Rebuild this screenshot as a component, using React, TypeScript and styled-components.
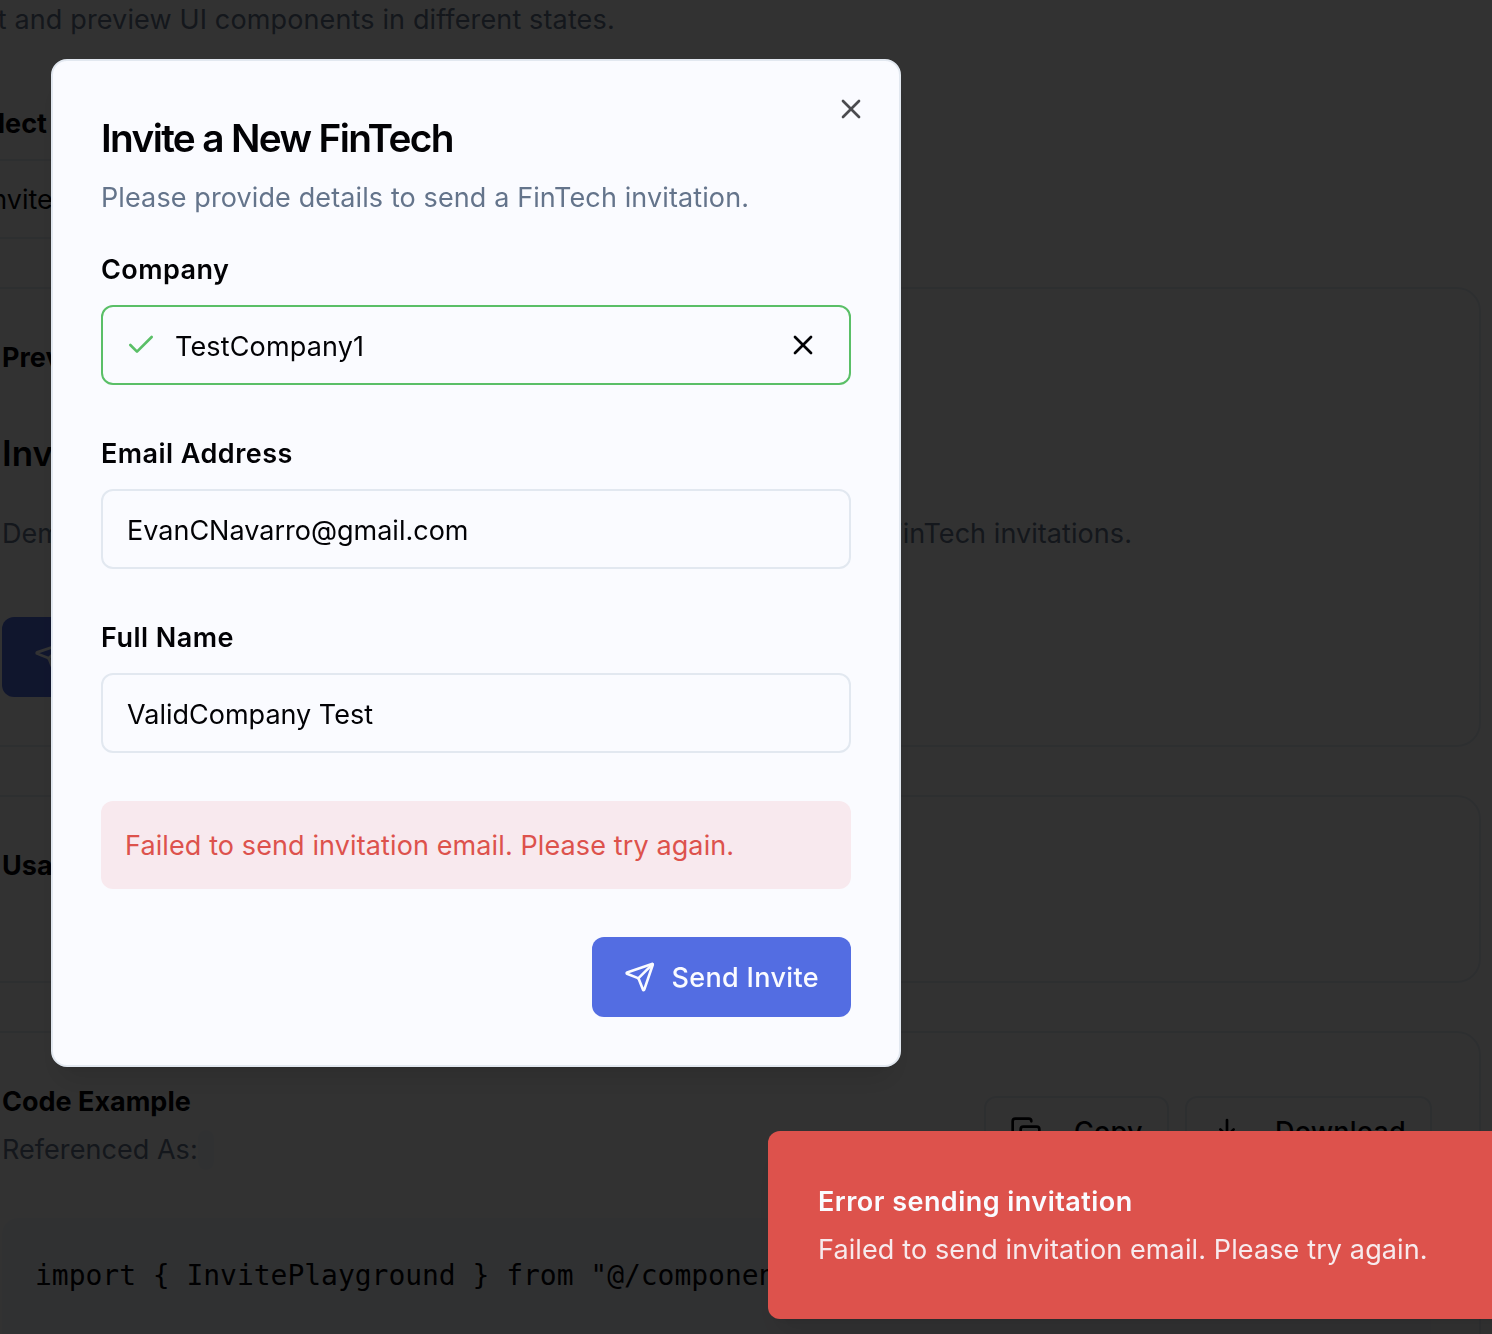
import React from "react";
import styled, { createGlobalStyle } from "styled-components";
import { Check, Copy, Download, Send, X } from "lucide-react";

const GlobalStyle = createGlobalStyle`
  *, *::before, *::after { box-sizing: border-box; }
  html, body { margin: 0; height: 100%; overflow: hidden; }
  body {
    background: #fafafa;
    color: #020205;
    font-family: Inter, "Liberation Sans", sans-serif;
    font-size: 27px;
    line-height: 40px;
  }
  h1, h2, h3, p, pre { margin: 0; }
  button, input { font: inherit; color: inherit; letter-spacing: inherit; }
`;

/* Playground page */

const Page = styled.main`
  width: 1529px;
  height: 100vh;
  margin-left: -48px;
  display: flex;
  flex-direction: column;
  overflow: hidden;
  white-space: nowrap;
`;

const Muted = styled.p`
  color: #64748b;
  letter-spacing: 0.14px;
`;

const Selector = styled.section`
  display: flex;
  flex-direction: column;
  gap: 15px;
  margin: 64px 0 48px;
  padding-left: 5px;
`;

const SelectorLabel = styled.h2`
  font-size: 27px;
  font-weight: 700;
  line-height: 40px;
  padding-left: 7px;
`;

const SelectBox = styled.div`
  width: 700px;
  height: 80px;
  padding: 2px 24px 0 25px;
  display: flex;
  align-items: center;
  border: 2px solid #e2e8f0;
  border-radius: 12px;
`;

const Card = styled.section<{ $height: number }>`
  flex: none;
  height: ${(p) => p.$height}px;
  margin-bottom: 48px;
  padding: 49px 48px 48px;
  border: 2px solid #e2e8f0;
  border-radius: 24px;
`;

const CardTitle = styled.h2`
  font-size: 27px;
  font-weight: 700;
  line-height: 40px;
`;

const DemoTitle = styled.h3`
  margin-top: 47px;
  font-size: 35px;
  font-weight: 600;
  line-height: 56px;
`;

const DemoText = styled(Muted)`
  width: 1130px;
  margin-top: 33px;
  display: flex;
  justify-content: space-between;
  letter-spacing: 0.06px;
`;

const CardHeader = styled.header`
  display: flex;
  justify-content: space-between;
  align-items: flex-start;
  height: 136px;
`;

const HeaderText = styled.div`
  display: flex;
  flex-direction: column;
  gap: 8px;
`;

const Reference = styled(Muted)`
  display: flex;
  align-items: center;
  letter-spacing: 0.05px;
`;

const CodeChip = styled.code`
  width: 16px;
  height: 40px;
  border-radius: 8px;
  background: #f1f5f9;
`;

const Actions = styled.div`
  display: flex;
  gap: 16px;
  padding-top: 14px;
  margin-right: -1px;
`;

const OutlineButton = styled.button<{ $width: number }>`
  width: ${(p) => p.$width}px;
  height: 72px;
  padding: 0 24px;
  display: flex;
  align-items: center;
  gap: 32px;
  border: 2px solid #e2e8f0;
  border-radius: 12px;
  background: transparent;
  font-weight: 500;
  letter-spacing: 0.2px;
`;

const CodeBlock = styled.pre`
  height: 150px;
  padding: 38px 33px;
  border-radius: 16px;
  background: #f1f5f9;
  font-family: "DejaVu Sans Mono", monospace;
  font-size: 28px;
  line-height: 40px;
  letter-spacing: -0.03px;
`;

/* Dialog */

const Overlay = styled.div`
  position: fixed;
  inset: 0;
  background: rgba(0, 0, 0, 0.8);
`;

const Dialog = styled.section`
  position: fixed;
  top: 59px;
  left: 51px;
  width: 850px;
  height: 1008px;
  padding: 49px 48px 48px;
  display: flex;
  flex-direction: column;
  border: 2px solid #e2e8f0;
  border-radius: 16px;
  background: #fafbff;
  box-shadow: 0 20px 30px -6px rgba(0, 0, 0, 0.1), 0 8px 12px -8px rgba(0, 0, 0, 0.1);
  color: #020205;
`;

const CloseButton = styled.button`
  position: absolute;
  top: 32px;
  right: 32px;
  padding: 0;
  display: flex;
  border: 0;
  background: none;
  opacity: 0.7;
`;

const DialogTitle = styled.h1`
  font-size: 38.8px;
  font-weight: 600;
  line-height: 56px;
  letter-spacing: -1.65px;
`;

const DialogText = styled(Muted)`
  margin-top: 12px;
  letter-spacing: 0.11px;
`;

const Form = styled.form`
  margin-top: 32px;
  display: flex;
  flex-direction: column;
  gap: 48px;
`;

const Field = styled.label`
  display: flex;
  flex-direction: column;
  gap: 15px;

  & + & {
    margin-top: 1px;
  }
`;

const FieldLabel = styled.span`
  font-weight: 600;
  letter-spacing: 0.46px;
`;

const InputBox = styled.div<{ $valid?: boolean }>`
  height: 80px;
  padding: 0 ${(p) => (p.$valid ? 30 : 24)}px 0 ${(p) => (p.$valid ? 22 : 24)}px;
  display: flex;
  align-items: center;
  border: 2px solid ${(p) => (p.$valid ? "#5abf67" : "#e2e8f0")};
  border-radius: 12px;
`;

const Input = styled.input<{ $indent?: boolean }>`
  flex: 1;
  min-width: 0;
  height: 44px;
  margin-left: ${(p) => (p.$indent ? 18 : 0)}px;
  padding: 2px 0 0;
  border: 0;
  outline: 0;
  background: none;
  letter-spacing: ${(p) => (p.$indent ? 0.15 : 0)}px;
`;

const Alert = styled.div`
  height: 88px;
  padding: 25px 24px 23px;
  border-radius: 12px;
  background: #f8e9ee;
  color: #dd524c;
  letter-spacing: 0.11px;
`;

const SendButton = styled.button<{ $inPage?: boolean }>`
  align-self: flex-end;
  width: 259px;
  height: 80px;
  margin-top: ${(p) => (p.$inPage ? 63 : 0)}px;
  padding: 0 32px;
  display: flex;
  align-items: center;
  gap: 16px;
  border: 0;
  border-radius: 12px;
  background: #536de2;
  color: #fafbff;
  font-weight: 500;
  letter-spacing: 0.35px;
  white-space: nowrap;
`;

const SendLabel = styled.span`
  padding-top: 2px;
`;

/* Notification */

const Toast = styled.aside`
  position: fixed;
  top: 1131px;
  left: 768px;
  width: 760px;
  height: 188px;
  padding: 51px 50px 49px;
  display: flex;
  flex-direction: column;
  gap: 8px;
  border-radius: 12px;
  background: #dd524c;
  color: #fafbff;
  box-shadow: 0 20px 30px -6px rgba(0, 0, 0, 0.1), 0 8px 12px -8px rgba(0, 0, 0, 0.1);
  white-space: nowrap;
`;

const ToastTitle = styled.h2`
  font-size: 27px;
  font-weight: 600;
  line-height: 40px;
  letter-spacing: 0.46px;
`;

const ToastText = styled.p`
  opacity: 0.9;
  letter-spacing: 0.12px;
`;

export default function App() {
  return (
    <>
      <GlobalStyle />
      <Page>
        <Muted>Test and preview UI components in different states.</Muted>
        <Selector>
          <SelectorLabel>Select</SelectorLabel>
          <SelectBox>Invite</SelectBox>
        </Selector>
        <Card $height={460}>
          <CardTitle>Preview</CardTitle>
          <DemoTitle>Invite</DemoTitle>
          <DemoText>
            <span>Demo</span>
            <span>FinTech invitations.</span>
          </DemoText>
          <SendButton $inPage>
            <Send size={32} />
          </SendButton>
        </Card>
        <Card $height={188}>
          <CardTitle>Usage</CardTitle>
        </Card>
        <Card $height={400}>
          <CardHeader>
            <HeaderText>
              <CardTitle>Code Example</CardTitle>
              <Reference>
                Referenced As:
                <CodeChip />
              </Reference>
            </HeaderText>
            <Actions>
              <OutlineButton $width={185}>
                <Copy size={32} />
                Copy
              </OutlineButton>
              <OutlineButton $width={247}>
                <Download size={32} />
                Download
              </OutlineButton>
            </Actions>
          </CardHeader>
          <CodeBlock>{'import { InvitePlayground } from "@/components"'}</CodeBlock>
        </Card>
      </Page>
      <Overlay />
      <Dialog role="dialog">
        <CloseButton aria-label="Close">
          <X size={32} />
        </CloseButton>
        <DialogTitle>Invite a New FinTech</DialogTitle>
        <DialogText>Please provide details to send a FinTech invitation.</DialogText>
        <Form>
          <Field>
            <FieldLabel>Company</FieldLabel>
            <InputBox $valid>
              <Check size={32} color="#5abf67" strokeWidth={2} />
              <Input $indent defaultValue="TestCompany1" />
              <X size={32} />
            </InputBox>
          </Field>
          <Field>
            <FieldLabel>Email Address</FieldLabel>
            <InputBox>
              <Input defaultValue="EvanCNavarro@gmail.com" />
            </InputBox>
          </Field>
          <Field>
            <FieldLabel>Full Name</FieldLabel>
            <InputBox>
              <Input defaultValue="ValidCompany Test" />
            </InputBox>
          </Field>
          <Alert>Failed to send invitation email. Please try again.</Alert>
          <SendButton type="button">
            <Send size={32} />
            <SendLabel>Send Invite</SendLabel>
          </SendButton>
        </Form>
      </Dialog>
      <Toast>
        <ToastTitle>Error sending invitation</ToastTitle>
        <ToastText>Failed to send invitation email. Please try again.</ToastText>
      </Toast>
    </>
  );
}
